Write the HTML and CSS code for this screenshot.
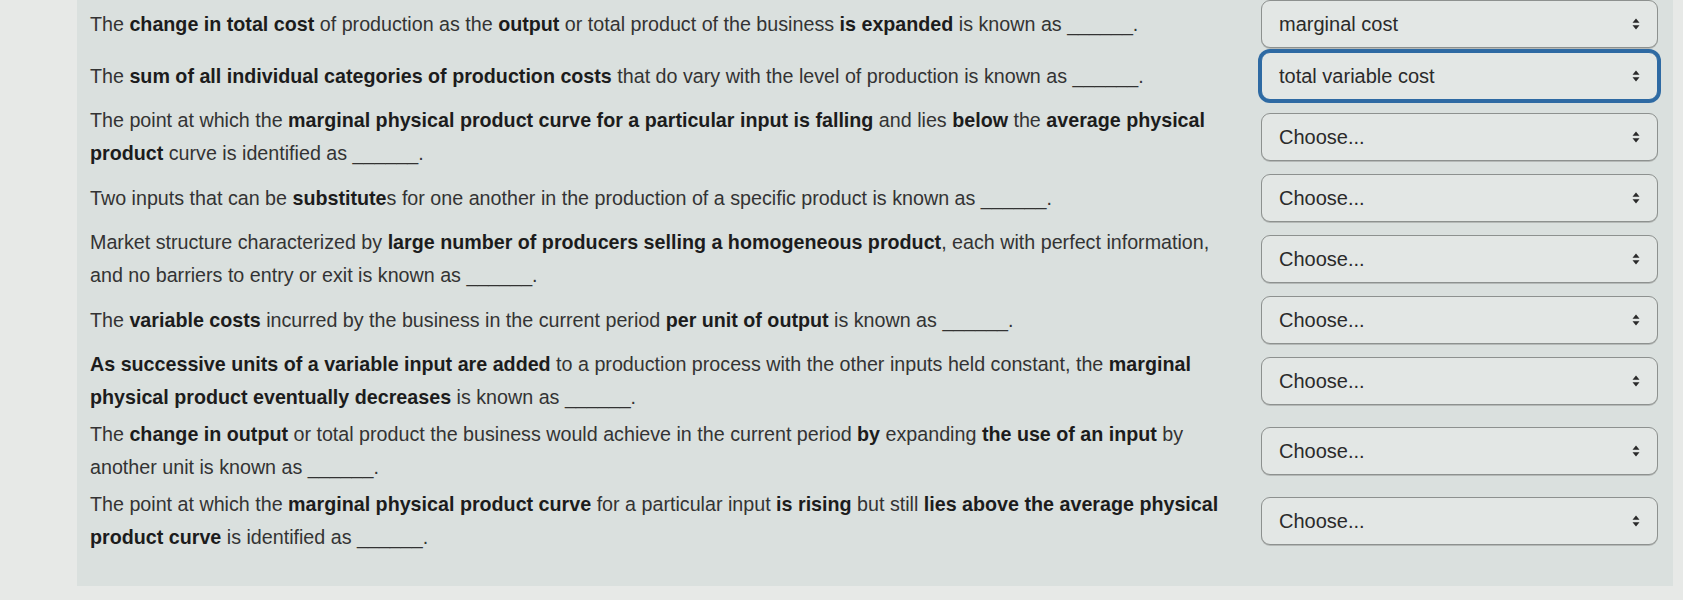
FILE: index.html
```html
<!DOCTYPE html>
<html>
<head>
<meta charset="utf-8">
<link rel="stylesheet" href="styles.css">
</head>
<body>
<div class="page">
  <div class="panel">
    <div class="row">
      <p class="q">The <b>change in total cost</b> of production as the <b>output</b> or total product of the business <b>is expanded</b> is known as ______.</p>
      <div class="sel"><span>marginal cost</span><svg class="arr" viewBox="0 0 8 12"><path d="M4 0.5 L7.5 4.8 L0.5 4.8 Z M4 11.5 L7.5 7.2 L0.5 7.2 Z"/></svg></div>
    </div>
    <div class="row">
      <p class="q">The <b>sum of all individual categories of production costs</b> that do vary with the level of production is known as ______.</p>
      <div class="sel focus"><span>total variable cost</span><svg class="arr" viewBox="0 0 8 12"><path d="M4 0.5 L7.5 4.8 L0.5 4.8 Z M4 11.5 L7.5 7.2 L0.5 7.2 Z"/></svg></div>
    </div>
    <div class="row">
      <p class="q">The point at which the <b>marginal physical product curve for a particular input is falling</b> and lies <b>below</b> the <b>average physical product</b> curve is identified as ______.</p>
      <div class="sel"><span>Choose...</span><svg class="arr" viewBox="0 0 8 12"><path d="M4 0.5 L7.5 4.8 L0.5 4.8 Z M4 11.5 L7.5 7.2 L0.5 7.2 Z"/></svg></div>
    </div>
    <div class="row">
      <p class="q">Two inputs that can be <b>substitute</b>s for one another in the production of a specific product is known as ______.</p>
      <div class="sel"><span>Choose...</span><svg class="arr" viewBox="0 0 8 12"><path d="M4 0.5 L7.5 4.8 L0.5 4.8 Z M4 11.5 L7.5 7.2 L0.5 7.2 Z"/></svg></div>
    </div>
    <div class="row">
      <p class="q">Market structure characterized by <b>large number of producers selling a homogeneous product</b>, each with perfect information, and no barriers to entry or exit is known as ______.</p>
      <div class="sel"><span>Choose...</span><svg class="arr" viewBox="0 0 8 12"><path d="M4 0.5 L7.5 4.8 L0.5 4.8 Z M4 11.5 L7.5 7.2 L0.5 7.2 Z"/></svg></div>
    </div>
    <div class="row">
      <p class="q">The <b>variable costs</b> incurred by the business in the current period <b>per unit of output</b> is known as ______.</p>
      <div class="sel"><span>Choose...</span><svg class="arr" viewBox="0 0 8 12"><path d="M4 0.5 L7.5 4.8 L0.5 4.8 Z M4 11.5 L7.5 7.2 L0.5 7.2 Z"/></svg></div>
    </div>
    <div class="row">
      <p class="q"><b>As successive units of a variable input are added</b> to a production process with the other inputs held constant, the <b>marginal physical product eventually decreases</b> is known as ______.</p>
      <div class="sel"><span>Choose...</span><svg class="arr" viewBox="0 0 8 12"><path d="M4 0.5 L7.5 4.8 L0.5 4.8 Z M4 11.5 L7.5 7.2 L0.5 7.2 Z"/></svg></div>
    </div>
    <div class="row">
      <p class="q">The <b>change in output</b> or total product the business would achieve in the current period <b>by</b> expanding <b>the use of an input</b> by another unit is known as ______.</p>
      <div class="sel"><span>Choose...</span><svg class="arr" viewBox="0 0 8 12"><path d="M4 0.5 L7.5 4.8 L0.5 4.8 Z M4 11.5 L7.5 7.2 L0.5 7.2 Z"/></svg></div>
    </div>
    <div class="row">
      <p class="q">The point at which the <b>marginal physical product curve</b> for a particular input <b>is rising</b> but still <b>lies above the average physical product curve</b> is identified as ______.</p>
      <div class="sel"><span>Choose...</span><svg class="arr" viewBox="0 0 8 12"><path d="M4 0.5 L7.5 4.8 L0.5 4.8 Z M4 11.5 L7.5 7.2 L0.5 7.2 Z"/></svg></div>
    </div>
  </div>
</div>
</body>
</html>
```
FILE: styles.css
```css
html, body {
  margin: 0;
  padding: 0;
  background: #e7e9e7;
}
.page {
  width: 1683px;
  height: 600px;
  overflow: hidden;
  padding-left: 77px;
  box-sizing: border-box;
  font-family: "Liberation Sans", Arial, sans-serif;
  color: #333;
}
.panel {
  width: 1596px;
  height: 586px;
  background: #dae0de;
  box-sizing: border-box;
  padding: 0 0 0 13px;
  display: flex;
  flex-direction: column;
  gap: 4px;
}
.row {
  display: grid;
  grid-template-columns: 1140px 397px;
  column-gap: 31px;
  align-items: center;
  min-height: 48px;
}
.q {
  margin: 0;
  font-size: 19.7px;
  line-height: 33px;
}
.q b {
  color: #1c1c1c;
  font-weight: bold;
}
.sel {
  height: 48px;
  box-sizing: border-box;
  border: 1px solid #8d918f;
  border-radius: 9px;
  background: #e3e7e5;
  box-shadow: 0 1px 0 #b5b9b7;
  display: flex;
  align-items: center;
  justify-content: space-between;
  padding: 0 17px 0 17px;
  font-size: 20px;
  color: #2a2a2a;
}
.sel.focus {
  border: 1px solid #2e6aa3;
  border-radius: 9px;
  box-shadow: 0 0 0 3px #2e6aa3;
}
.arr {
  width: 8px;
  height: 12px;
  fill: #2a2a2a;
}
```
